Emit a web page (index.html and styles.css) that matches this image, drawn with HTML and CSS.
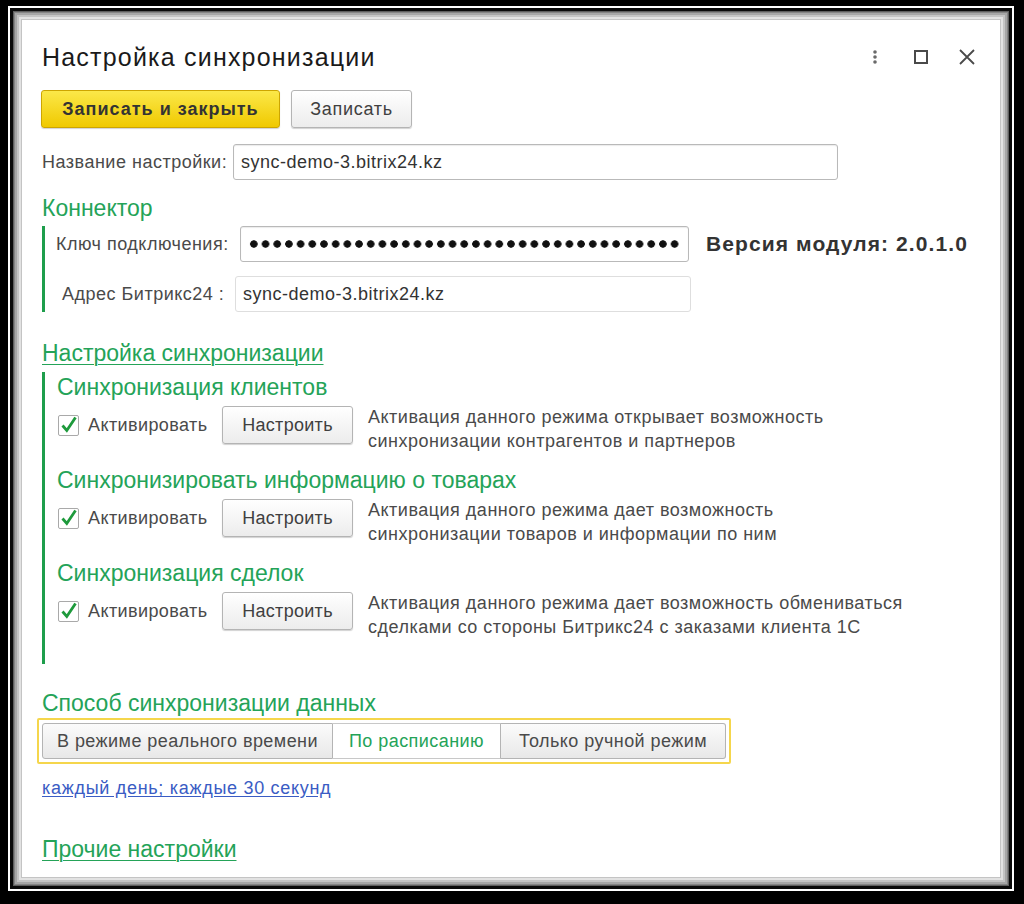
FILE: index.html
```html
<!DOCTYPE html>
<html lang="ru">
<head>
<meta charset="utf-8">
<title>Настройка синхронизации</title>
<link rel="stylesheet" href="styles.css">
</head>
<body>
<div class="screen">
 <div class="ring">
  <div class="ring2">
   <div class="shade">
    <div class="win">
      <div class="titlebar">
        <h1 class="title">Настройка синхронизации</h1>
        <div class="tools">
          <svg class="ic-more" width="6" height="16" viewBox="0 0 6 16"><circle cx="3" cy="3" r="1.8"/><circle cx="3" cy="8" r="1.8"/><circle cx="3" cy="13" r="1.8"/></svg>
          <svg class="ic-max" width="14" height="14" viewBox="0 0 14 14"><rect x="1" y="1" width="12" height="12"/></svg>
          <svg class="ic-close" width="16" height="16" viewBox="0 0 16 16"><path d="M1 1L15 15M15 1L1 15"/></svg>
        </div>
      </div>

      <div class="cmdbar">
        <button class="btn btn-primary">Записать и закрыть</button>
        <button class="btn btn-save">Записать</button>
      </div>

      <div class="field-row name-row">
        <span class="label name-label">Название настройки:</span>
        <div class="input name-input">sync-demo-3.bitrix24.kz</div>
      </div>

      <div class="group-title">Коннектор</div>
      <div class="group connector">
        <div class="field-row key-row">
          <span class="label key-label">Ключ подключения:</span>
          <div class="input key-input"><span class="dots" role="img" aria-label="скрытый ключ"></span></div>
          <span class="version">Версия модуля: 2.0.1.0</span>
        </div>
        <div class="field-row addr-row">
          <span class="label addr-label">Адрес Битрикс24 :</span>
          <div class="input addr-input">sync-demo-3.bitrix24.kz</div>
        </div>
      </div>

      <a class="group-link" href="#">Настройка синхронизации</a>
      <div class="group sync">
        <section class="mode">
          <div class="mode-title">Синхронизация клиентов</div>
          <div class="mode-row">
            <label class="check"><span class="box"><svg width="20" height="20" viewBox="0 0 20 20"><path d="M4.5 10.5L8.8 15.5L17.5 2.5"/></svg></span><span class="check-text">Активировать</span></label>
            <button class="btn btn-setup">Настроить</button>
            <p class="desc">Активация данного режима открывает возможность<br>синхронизации контрагентов и партнеров</p>
          </div>
        </section>
        <section class="mode">
          <div class="mode-title">Синхронизировать информацию о товарах</div>
          <div class="mode-row">
            <label class="check"><span class="box"><svg width="20" height="20" viewBox="0 0 20 20"><path d="M4.5 10.5L8.8 15.5L17.5 2.5"/></svg></span><span class="check-text">Активировать</span></label>
            <button class="btn btn-setup">Настроить</button>
            <p class="desc">Активация данного режима дает возможность<br>синхронизации товаров и информации по ним</p>
          </div>
        </section>
        <section class="mode">
          <div class="mode-title">Синхронизация сделок</div>
          <div class="mode-row">
            <label class="check"><span class="box"><svg width="20" height="20" viewBox="0 0 20 20"><path d="M4.5 10.5L8.8 15.5L17.5 2.5"/></svg></span><span class="check-text">Активировать</span></label>
            <button class="btn btn-setup">Настроить</button>
            <p class="desc">Активация данного режима дает возможность обмениваться<br>сделками со стороны Битрикс24 с заказами клиента 1С</p>
          </div>
        </section>
      </div>

      <div class="group-title method-title">Способ синхронизации данных</div>
      <div class="segment">
        <button class="seg seg-1">В режиме реального времени</button>
        <button class="seg seg-2 selected">По расписанию</button>
        <button class="seg seg-3">Только ручной режим</button>
      </div>
      <a class="schedule" href="#">каждый день; каждые 30 секунд</a>

      <a class="group-link other" href="#">Прочие настройки</a>
    </div>
   </div>
  </div>
 </div>
</div>
</body>
</html>
```

FILE: styles.css
```css
html, body {
  margin: 0;
  padding: 0;
  background: #000;
}
body {
  font-family: "Liberation Sans", Arial, sans-serif;
}
.screen {
  width: 1024px;
  height: 904px;
  box-sizing: border-box;
  background: #000;
  padding: 6px 10px 13px 8px;
}
.ring {
  height: 100%;
  box-sizing: border-box;
  border: 2px solid #fff;
}
.ring2 {
  height: 100%;
  box-sizing: border-box;
  border: 3px solid #0a0a0a;
}
.shade {
  height: 100%;
  box-sizing: border-box;
  padding: 8px;
  background: #e2e2e2;
  box-shadow: inset 0 0 0 1px #5e5e5e, inset 0 0 0 2px #858585, inset 0 0 0 4px #a6a6a6, inset 0 0 0 6px #c4c4c4;
}
.win {
  height: 100%;
  box-sizing: border-box;
  background: #fff;
  border: 1px solid #c4c4c4;
  padding: 23px 20px 0 20px;
  display: flex;
  flex-direction: column;
  align-items: flex-start;
}

/* title */
.titlebar {
  align-self: stretch;
  display: flex;
  align-items: center;
  justify-content: space-between;
  height: 28px;
}
.title {
  margin: 0;
  font-size: 25px;
  line-height: 28px;
  letter-spacing: 1.2px;
  font-weight: normal;
  color: #1a1a1a;
}
.tools {
  display: flex;
  align-items: center;
  padding-right: 5px;
}
.ic-more { fill: #6a6a6a; }
.ic-max { fill: none; stroke: #4a4a4a; stroke-width: 2; margin-left: 36px; }
.ic-close { fill: none; stroke: #4a4a4a; stroke-width: 1.8; margin-left: 31px; }

/* buttons */
.btn {
  font-family: "Liberation Sans", Arial, sans-serif;
  font-size: 18px;
  letter-spacing: 0.5px;
  color: #404040;
  height: 38px;
  box-sizing: border-box;
  border: 1px solid #b4b4b4;
  border-radius: 3px;
  background: linear-gradient(#ffffff, #ececec);
  box-shadow: 0 1px 1px rgba(0,0,0,0.18);
  padding: 0;
  cursor: default;
}
.cmdbar {
  display: flex;
  margin-top: 19px;
  margin-left: -1px;
}
.btn-primary {
  width: 239px;
  font-weight: bold;
  letter-spacing: 1px;
  color: #333;
  background: linear-gradient(#fbe849, #f0c900);
  border-color: #cda500;
}
.btn-save {
  width: 121px;
  margin-left: 11px;
  letter-spacing: 0.7px;
}

/* fields */
.field-row {
  display: flex;
  align-items: center;
}
.label {
  font-size: 18px;
  letter-spacing: 0.5px;
  color: #4a4a4a;
  white-space: nowrap;
}
.input {
  height: 36px;
  box-sizing: border-box;
  border: 1px solid #b9b9b9;
  border-radius: 3px;
  box-shadow: inset 0 1px 1px rgba(0,0,0,0.08);
  font-size: 18px;
  letter-spacing: 0.5px;
  color: #333;
  padding-left: 7px;
  display: flex;
  align-items: center;
  background: #fff;
}
.name-row { margin-top: 16px; }
.name-label { width: 191px; }
.name-input { width: 605px; }

.group-title {
  font-size: 23px;
  line-height: 26px;
  color: #24a358;
  margin-top: 15px;
}
.group {
  border-left: 3px solid #1e9e4c;
}
.connector {
  margin-top: 5px;
  padding-left: 11px;
}
.key-label { width: 184px; }
.key-input { width: 449px; overflow: hidden; padding-left: 7px; }
.dots {
  display: block;
  width: 433px;
  height: 10px;
  background: radial-gradient(circle, #111 3.4px, rgba(17,17,17,0) 4px) 0 0 / 11.7px 10px repeat-x;
}
.version {
  margin-left: 17px;
  font-size: 21px;
  letter-spacing: 1.1px;
  font-weight: bold;
  color: #333;
}
.addr-row { margin-top: 14px; }
.addr-label { width: 173px; margin-left: 6px; }
.addr-input { width: 456px; border-color: #dedede; box-shadow: none; }

.group-link {
  display: block;
  font-size: 23px;
  line-height: 26px;
  color: #24a358;
  text-decoration: underline;
  text-underline-offset: 3px;
  text-decoration-thickness: 1px;
  margin-top: 28px;
}

.sync {
  margin-top: 6px;
  padding: 2px 0 25px 12px;
}
.mode + .mode { margin-top: 14px; }
.mode-title {
  font-size: 23px;
  line-height: 26px;
  color: #24a358;
}
.mode-row {
  display: flex;
  align-items: flex-start;
  margin-top: 6px;
}
.check {
  display: flex;
  align-items: center;
  width: 164px;
  height: 38px;
  margin-left: 1px;
}
.box {
  width: 21px;
  height: 21px;
  box-sizing: border-box;
  border: 1px solid #a9a9a9;
  border-radius: 2px;
  background: #fff;
  position: relative;
}
.box svg {
  position: absolute;
  left: -1px;
  top: -1px;
  overflow: visible;
  fill: none;
  stroke: #1e9a3c;
  stroke-width: 2.8;
}
.check-text {
  margin-left: 9px;
  font-size: 18px;
  letter-spacing: 0.4px;
  color: #4a4a4a;
}
.btn-setup {
  width: 131px;
  letter-spacing: 0.3px;
}
.desc {
  margin: -1px 0 0 15px;
  font-size: 18px;
  letter-spacing: 0.5px;
  line-height: 24px;
  color: #4a4a4a;
}

.method-title { margin-top: 26px; }
.segment {
  display: flex;
  margin-top: 2px;
  margin-left: -5px;
  border: 2px solid #f5d64c;
  border-radius: 2px;
  padding: 3px;
}
.seg {
  font-family: "Liberation Sans", Arial, sans-serif;
  font-size: 18px;
  letter-spacing: 0.45px;
  color: #4a4a4a;
  height: 36px;
  box-sizing: border-box;
  border: 1px solid #b4b4b4;
  background: linear-gradient(#fbfbfb, #e8e8e8);
  padding: 0;
  cursor: default;
}
.seg-1 { width: 291px; border-radius: 3px 0 0 3px; }
.seg-2 { width: 168px; border-left: none; }
.seg-3 { width: 225px; border-left: none; border-radius: 0 3px 3px 0; }
.seg.selected {
  background: #fff;
  color: #24a358;
  border-top-color: #c8c8c8;
  border-bottom-color: #c8c8c8;
}
.schedule {
  display: block;
  margin-top: 14px;
  font-size: 18px;
  letter-spacing: 0.7px;
  line-height: 20px;
  color: #3a5cc4;
  text-decoration: underline;
  text-underline-offset: 2px;
}
.other { margin-top: 38px; }
```
